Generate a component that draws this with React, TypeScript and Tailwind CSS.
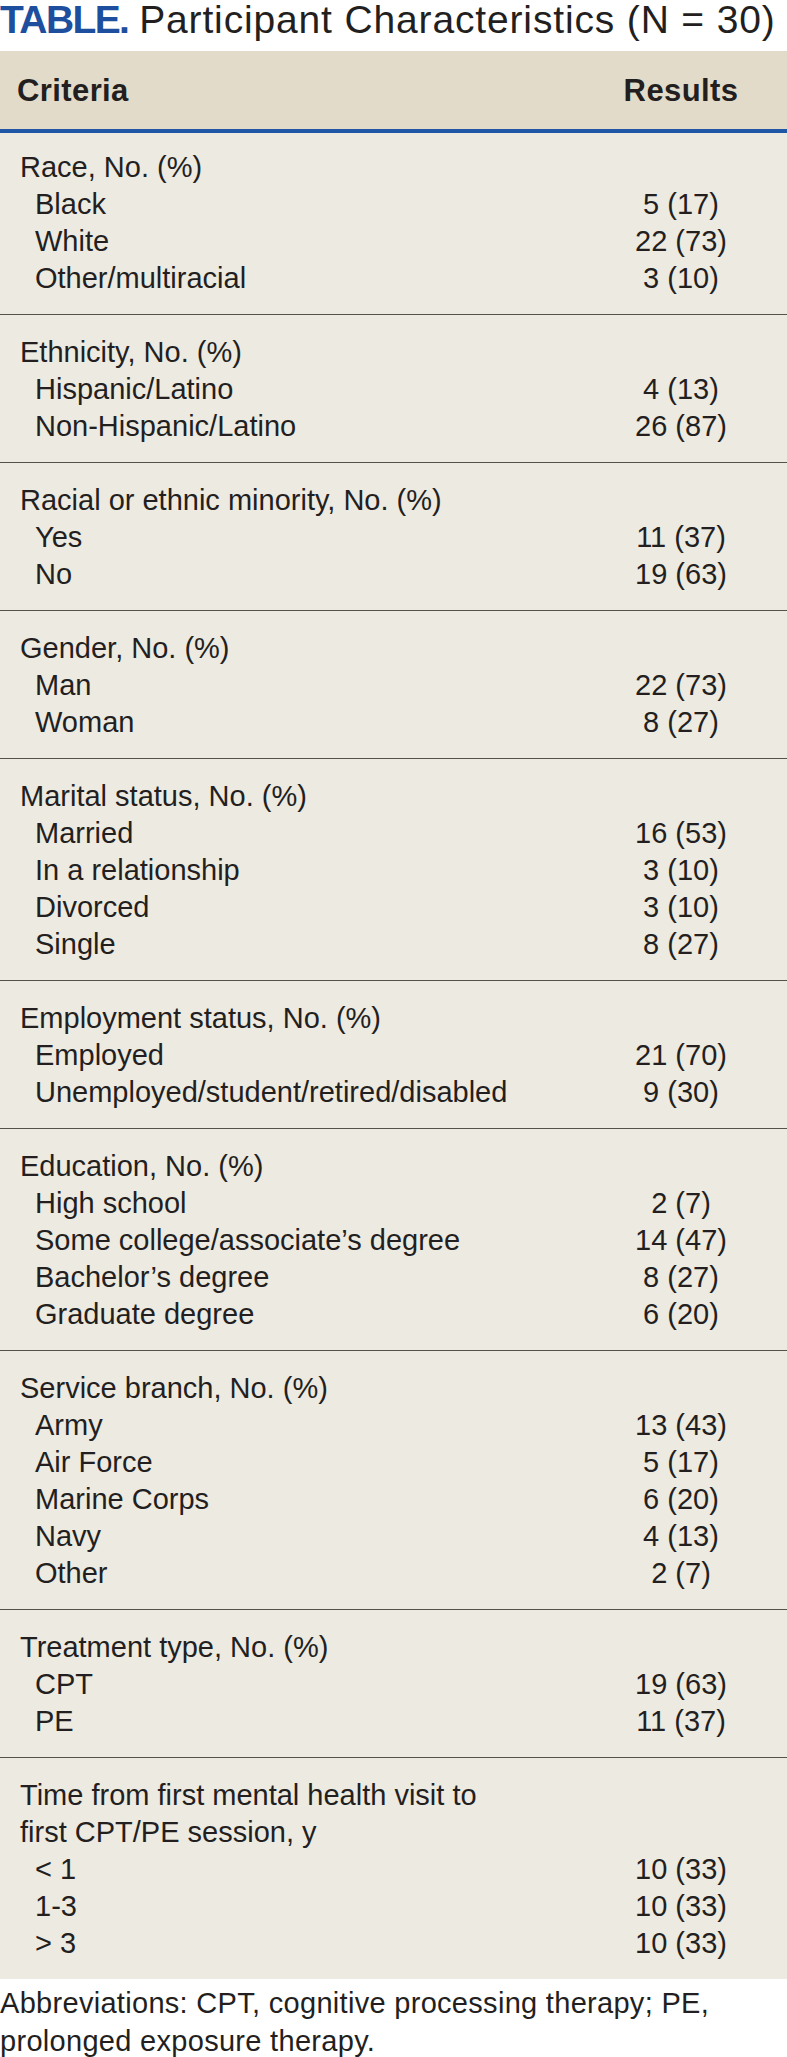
import React from "react";

type Section = { title: React.ReactNode; rows: [string, string][] };

const sections: Section[] = [
  { title: "Race, No. (%)", rows: [["Black", "5 (17)"], ["White", "22 (73)"], ["Other/multiracial", "3 (10)"]] },
  { title: "Ethnicity, No. (%)", rows: [["Hispanic/Latino", "4 (13)"], ["Non-Hispanic/Latino", "26 (87)"]] },
  { title: "Racial or ethnic minority, No. (%)", rows: [["Yes", "11 (37)"], ["No", "19 (63)"]] },
  { title: "Gender, No. (%)", rows: [["Man", "22 (73)"], ["Woman", "8 (27)"]] },
  {
    title: "Marital status, No. (%)",
    rows: [["Married", "16 (53)"], ["In a relationship", "3 (10)"], ["Divorced", "3 (10)"], ["Single", "8 (27)"]],
  },
  {
    title: "Employment status, No. (%)",
    rows: [["Employed", "21 (70)"], ["Unemployed/student/retired/disabled", "9 (30)"]],
  },
  {
    title: "Education, No. (%)",
    rows: [
      ["High school", "2 (7)"],
      ["Some college/associate\u2019s degree", "14 (47)"],
      ["Bachelor\u2019s degree", "8 (27)"],
      ["Graduate degree", "6 (20)"],
    ],
  },
  {
    title: "Service branch, No. (%)",
    rows: [["Army", "13 (43)"], ["Air Force", "5 (17)"], ["Marine Corps", "6 (20)"], ["Navy", "4 (13)"], ["Other", "2 (7)"]],
  },
  { title: "Treatment type, No. (%)", rows: [["CPT", "19 (63)"], ["PE", "11 (37)"]] },
  {
    title: (
      <>
        Time from first mental health visit to
        <br />
        first CPT/PE session, y
      </>
    ),
    rows: [["< 1", "10 (33)"], ["1-3", "10 (33)"], ["> 3", "10 (33)"]],
  },
];

export default function App() {
  return (
    <div
      className="w-[787px] bg-white text-[#231f20]"
      style={{ fontFamily: '"Liberation Sans", Arial, sans-serif' }}
    >
      <h1 className="text-[39px] leading-[39px] whitespace-nowrap font-normal">
        <span className="font-bold text-[#1d4f9e] tracking-[-1.6px]">TABLE.</span>{" "}
        <span className="tracking-[0.85px]">Participant Characteristics (N = 30)</span>
      </h1>

      <div className="mt-[12px] bg-[#edeae2]">
        <div className="grid grid-cols-[1fr_212px] h-[78px] items-start pt-[21px] bg-[#e2dbca] text-[31px] leading-[37px] font-bold tracking-[0.4px]">
          <div className="pl-[17px]">Criteria</div>
          <div className="text-center">Results</div>
        </div>
        <div className="h-[4px] bg-[#1f57a6]" />

        {sections.map((s, i) => (
          <div
            key={i}
            className={
              i === 0
                ? "pt-[16px] pb-[17px] text-[29px] leading-[37px]"
                : "border-t border-[#55524c] pt-[19px] pb-[17px] text-[29px] leading-[37px]"
            }
          >
            <div className="pl-[20px]">{s.title}</div>
            {s.rows.map(([label, value], j) => (
              <div key={j} className="grid grid-cols-[1fr_212px]">
                <div className="pl-[35px] whitespace-nowrap">{label}</div>
                <div className="text-center whitespace-nowrap">{value}</div>
              </div>
            ))}
          </div>
        ))}
      </div>

      <p className="mt-[5px] text-[29px] leading-[38px] tracking-[0.3px]">
        Abbreviations: CPT, cognitive processing therapy; PE,
        <br />
        prolonged exposure therapy.
      </p>
    </div>
  );
}
